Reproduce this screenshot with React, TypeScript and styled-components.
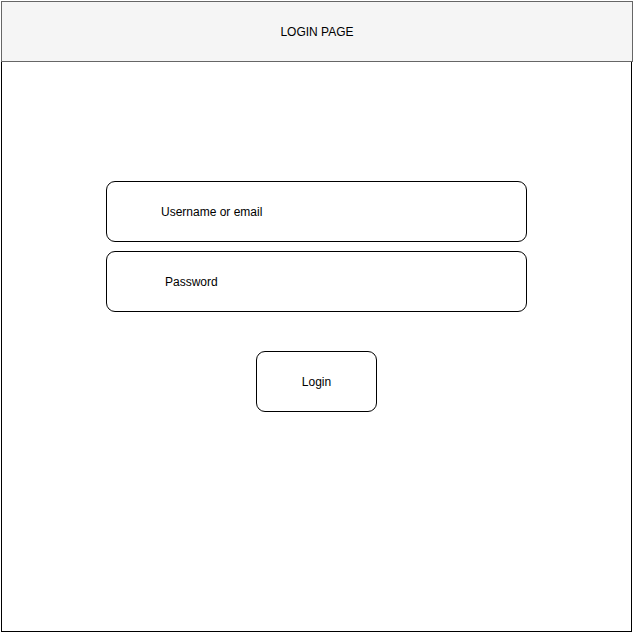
import React from "react";
import styled, { createGlobalStyle } from "styled-components";

const Global = createGlobalStyle`
  html, body { margin: 0; padding: 0; background: #ffffff; }
  body { font-family: "Liberation Sans", Arial, sans-serif; }
  * { box-sizing: border-box; }
`;

const Page = styled.div`
  padding: 1px 0 0 1px;
  width: 634px;
  height: 632px;
  display: flex;
  flex-direction: column;
`;

const Header = styled.header`
  width: 632px;
  height: 61px;
  border: 1px solid #666666;
  background: #f5f5f5;
  display: flex;
  align-items: center;
  justify-content: center;
  font-size: 12px;
  color: #000;
`;

const Body = styled.main`
  width: 631px;
  height: 570px;
  border: 1px solid #000;
  border-top: none;
  display: flex;
  flex-direction: column;
  align-items: center;
  padding-top: 119px;
`;

const Form = styled.form`
  display: flex;
  flex-direction: column;
  align-items: center;
  width: 100%;
`;

const Field = styled.div<{ $indent: number }>`
  width: 421px;
  height: 61px;
  border: 1px solid #000;
  border-radius: 9px;
  display: flex;
  align-items: center;
  padding-left: ${(p) => p.$indent}px;
  font-size: 12px;
  color: #000;
  margin-bottom: 9px;
`;

const Button = styled.div`
  margin-top: 30px;
  width: 121px;
  height: 61px;
  border: 1px solid #000;
  border-radius: 9px;
  display: flex;
  align-items: center;
  justify-content: center;
  font-size: 12px;
  color: #000;
`;

export default function App() {
  return (
    <>
      <Global />
      <Page>
        <Header>LOGIN PAGE</Header>
        <Body>
          <Form>
            <Field $indent={54}>Username or email</Field>
            <Field $indent={58}>Password</Field>
            <Button>Login</Button>
          </Form>
        </Body>
      </Page>
    </>
  );
}
